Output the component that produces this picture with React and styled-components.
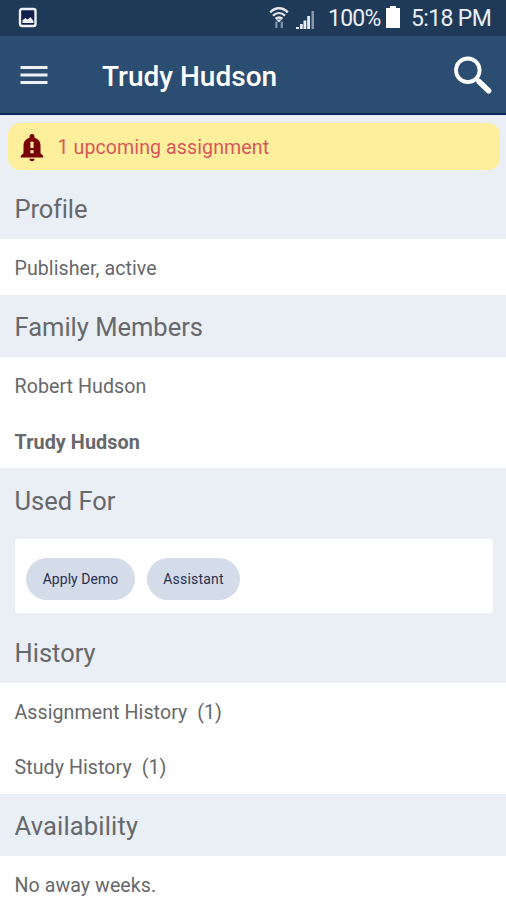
import React from "react";
import styled, { createGlobalStyle } from "styled-components";

const GlobalStyle = createGlobalStyle`
  * { box-sizing: border-box; }
  body { margin: 0; background: #fff; font-family: Roboto, "Liberation Sans", sans-serif; color: #66686b; }
`;

const Screen = styled.div`
  width: 506px;
  height: 900px;
  overflow: hidden;
  display: flex;
  flex-direction: column;
  background: #fff;
`;

const StatusBar = styled.header`
  flex: none;
  height: 36px;
  padding: 0 15px 0 17px;
  display: flex;
  align-items: center;
  background: #1f3a58;
  color: #e9eef6;
  font-size: 23px;
  line-height: 36px;
  white-space: nowrap;
`;

const StatusText = styled.span`
  width: ${(p) => p.$width}px;
  padding-top: 2px;
  letter-spacing: ${(p) => p.$spacing}px;
`;

const StatusIcons = styled.div`
  display: flex;
  gap: 7px;
  margin: -1px 13px 0 auto;
`;

const Battery = styled.svg`
  margin: -2px 10px 0 5px;
`;

const Toolbar = styled.nav`
  flex: none;
  height: 79px;
  padding: 0 13px 0 20px;
  display: flex;
  align-items: center;
  background: #2a4d71;
  border-bottom: 2px solid #0b2a59;
`;

const Title = styled.h1`
  flex: 1;
  margin: 4px 0 0 54px;
  color: #fff;
  font-size: 28px;
  font-weight: 500;
  line-height: 36px;
`;

const NoticeArea = styled.div`
  flex: none;
  height: 64px;
  padding: 8px 6px 0 8px;
  background: #eaeef5;
`;

const Notice = styled.div`
  height: 47px;
  padding: 2px 0 0 12px;
  display: flex;
  align-items: center;
  gap: 13.5px;
  border-radius: 12px;
  background: #feef9d;
  color: #d8575a;
  font-size: 19.6px;
  letter-spacing: 0.08px;
  line-height: 24px;
`;

const Heading = styled.h2`
  flex: none;
  margin: 0;
  height: ${(p) => p.$height}px;
  padding: ${(p) => p.$top}px 0 0 14.5px;
  background: #eaeef5;
  font-size: 25.5px;
  font-weight: 400;
  letter-spacing: ${(p) => p.$spacing || 0}px;
  line-height: 30px;
`;

const List = styled.div`
  flex: none;
  height: ${(p) => p.$height}px;
  background: #fff;
`;

const Row = styled.div`
  height: 55px;
  padding: ${(p) => (p.$strong ? 3 : 2)}px 0 0 14.5px;
  font-size: ${(p) => (p.$strong ? 19.8 : 19.6)}px;
  font-weight: ${(p) => (p.$strong ? 700 : 400)};
  letter-spacing: 0.07px;
  line-height: 55px;
  white-space: pre;
`;

const CardArea = styled.div`
  flex: none;
  height: 84px;
  padding: 0 13px 0 15px;
  background: #eaeef5;
`;

const Card = styled.div`
  height: 74px;
  padding-left: 11px;
  display: flex;
  align-items: center;
  gap: 12px;
  border-radius: 2px;
  background: #fff;
`;

const Chip = styled.span`
  width: ${(p) => p.$width}px;
  height: 42px;
  margin-top: 5px;
  border-radius: 21px;
  background: #d4dbe9;
  color: #27304f;
  font-size: 14px;
  letter-spacing: ${(p) => p.$spacing}px;
  line-height: 43px;
  text-align: center;
`;

const PictureIcon = () => (
  <svg width="21" height="22" viewBox="0 0 21 22">
    <rect x="3" y="2" width="15.5" height="17" rx="2" fill="#10204a" stroke="#eef1f8" strokeWidth="2.4" />
    <path d="M5.5 16v-2.7l3-2.2 2 1.4 3-2.2 3 3.7v2z" fill="#eef1f8" />
  </svg>
);

const WifiIcon = () => (
  <svg width="20" height="24" viewBox="0 0 20 24" fill="none" stroke="#e2e7ef" strokeWidth="2.4">
    <path d="M1.2 6.3C6.5.8 13.5.8 18.8 6.3M4 9.7c3.7-3.5 8.3-3.5 12 0M6.5 12.8c2.3-1.8 4.7-1.8 7 0" />
    <path d="m7.2 13.4 2.8 3 2.8-3z" fill="#e2e7ef" stroke="none" />
    <path d="M7.4 15.5v6.5M12.8 15.5v6.5" stroke="#8294aa" strokeWidth="2.2" />
  </svg>
);

const SignalIcon = () => (
  <svg width="19" height="24" viewBox="0 0 19 24" fill="#e8edf5">
    <path d="M0 21h3v2H0zM4 18h2.8v5H4zM7.5 14.5h2.8V23H7.5zM11.2 10H14v13h-2.8z" />
    <path d="M15.5 5H18v18h-2.5z" fill="#8997ab" />
  </svg>
);

const MenuIcon = () => (
  <svg width="28" height="22" viewBox="0 0 28 22" stroke="#edf1f6" strokeWidth="3">
    <path d="M.5 3.5h27M.5 11h27M.5 18.5h27" />
  </svg>
);

const SearchIcon = () => (
  <svg width="40" height="40" viewBox="0 0 40 40" fill="none" stroke="#fff">
    <circle cx="14.8" cy="15.3" r="11.8" strokeWidth="3.8" />
    <path d="m23.4 23.6 4 4" strokeWidth="4" />
    <path d="m26.2 26.7 9.4 9.1" strokeWidth="5.5" strokeLinecap="round" />
  </svg>
);

const AlertBell = () => (
  <svg width="24" height="28" viewBox="0 0 24 28">
    <path fill="#780407" d="M9.5 3.8V2.5a2.5 2.5 0 0 1 5 0v1.3c4 1 6 4.1 6 8.1v7.3l2.7 2.5V23.5H.8v-1.8l2.7-2.5v-7.3c0-4 2-7.1 6-8.1zM9.5 24.8h5a2.5 2.5 0 0 1-5 0z" />
    <path fill="#feef9d" d="M10.4 7.8h3.2v6.3h-3.2zM10.4 16.3h3.2v3h-3.2z" />
  </svg>
);

export default function App() {
  return (
    <Screen>
      <GlobalStyle />
      <StatusBar>
        <PictureIcon />
        <StatusIcons><WifiIcon /><SignalIcon /></StatusIcons>
        <StatusText $width={52} $spacing={-0.8}>100%</StatusText>
        <Battery width="16" height="24" viewBox="0 0 16 24" fill="#fff"><path d="M5 1h6v2h4v20H1V3h4z" /></Battery>
        <StatusText $width={80} $spacing={-0.65}>5:18 PM</StatusText>
      </StatusBar>
      <Toolbar>
        <MenuIcon />
        <Title>Trudy Hudson</Title>
        <SearchIcon />
      </Toolbar>
      <NoticeArea>
        <Notice><AlertBell />1 upcoming assignment</Notice>
      </NoticeArea>
      <Heading $height={60} $top={15} $spacing={-0.15}>Profile</Heading>
      <List $height={56}><Row>Publisher, active</Row></List>
      <Heading $height={62} $top={17}>Family Members</Heading>
      <List $height={111}>
        <Row>Robert Hudson</Row>
        <Row $strong>Trudy Hudson</Row>
      </List>
      <Heading $height={71} $top={18}>Used For</Heading>
      <CardArea>
        <Card>
          <Chip $width={109} $spacing={0.05}>Apply Demo</Chip>
          <Chip $width={93} $spacing={0.2}>Assistant</Chip>
        </Card>
      </CardArea>
      <Heading $height={60} $top={15}>History</Heading>
      <List $height={111}>
        <Row>Assignment History  (1)</Row>
        <Row>Study History  (1)</Row>
      </List>
      <Heading $height={62} $top={17} $spacing={0.17}>Availability</Heading>
      <List $height={56}><Row>No away weeks.</Row></List>
    </Screen>
  );
}
